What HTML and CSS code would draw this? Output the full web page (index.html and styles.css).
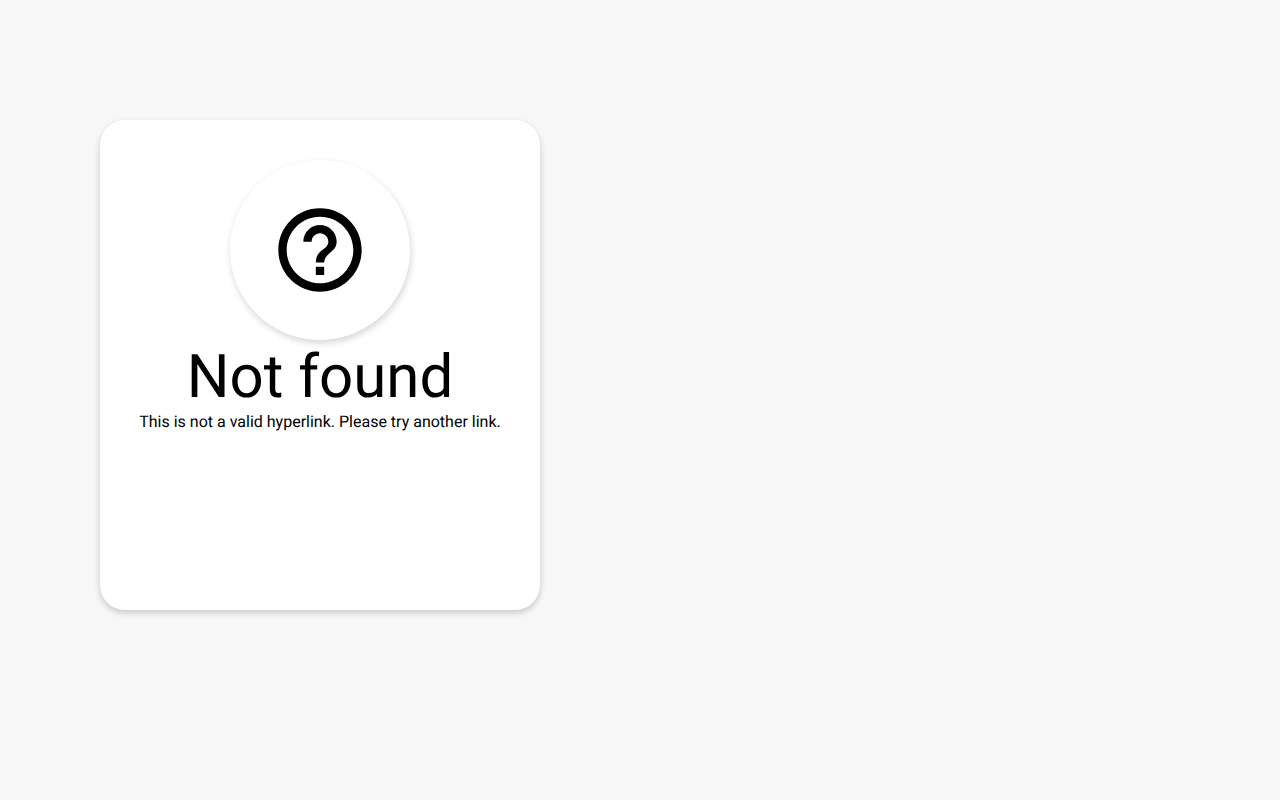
FILE: index.html
```html
<!DOCTYPE html>
<html lang="en">
<head>
  <meta charset="UTF-8">
  <meta name="viewport" content="width=device-width, initial-scale=1.0">
  <title>Not found</title>
  <link rel="stylesheet" href="styles.css">
</head>
<body>
  <main class="card">
    <div class="icon">
      <svg viewBox="0 0 24 24" aria-hidden="true">
        <path d="M11 18h2v-2h-2v2zm1-16C6.48 2 2 6.48 2 12s4.48 10 10 10 10-4.48 10-10S17.52 2 12 2zm0 18c-4.41 0-8-3.59-8-8s3.59-8 8-8 8 3.59 8 8-3.59 8-8 8zm0-14c-2.21 0-4 1.79-4 4h2c0-1.1.9-2 2-2s2 .9 2 2c0 2-3 1.75-3 5h2c0-2.25 3-2.5 3-5 0-2.21-1.79-4-4-4z"/>
      </svg>
    </div>
    <h1>Not found</h1>
    <p>This is not a valid hyperlink. Please try another link.</p>
  </main>
</body>
</html>
```
FILE: styles.css
```css
* {
  margin: 0;
  padding: 0;
  box-sizing: border-box;
}

body {
  font-family: 'Roboto', sans-serif;
  text-rendering: geometricPrecision;
  background-color: #f8f8f8;
  color: #000;
  padding: 120px 100px;
}

.card {
  width: 440px;
  max-width: 100%;
  min-height: 490px;
  padding: 40px 20px;
  text-align: center;
  background-color: #fff;
  border-radius: 25px;
  box-shadow: 0 3px 7px rgba(0, 0, 0, 0.2);
}

.icon {
  display: flex;
  justify-content: center;
  align-items: center;
  width: 180px;
  height: 180px;
  margin: 0 auto;
  border-radius: 50%;
  box-shadow: 1px 3px 7px rgba(0, 0, 0, 0.17);
}

.icon svg {
  width: 100px;
  height: 100px;
}

h1 {
  font-size: 60px;
  font-weight: 400;
  line-height: 74px;
}

p {
  font-size: 16px;
  line-height: 16px;
}
```
